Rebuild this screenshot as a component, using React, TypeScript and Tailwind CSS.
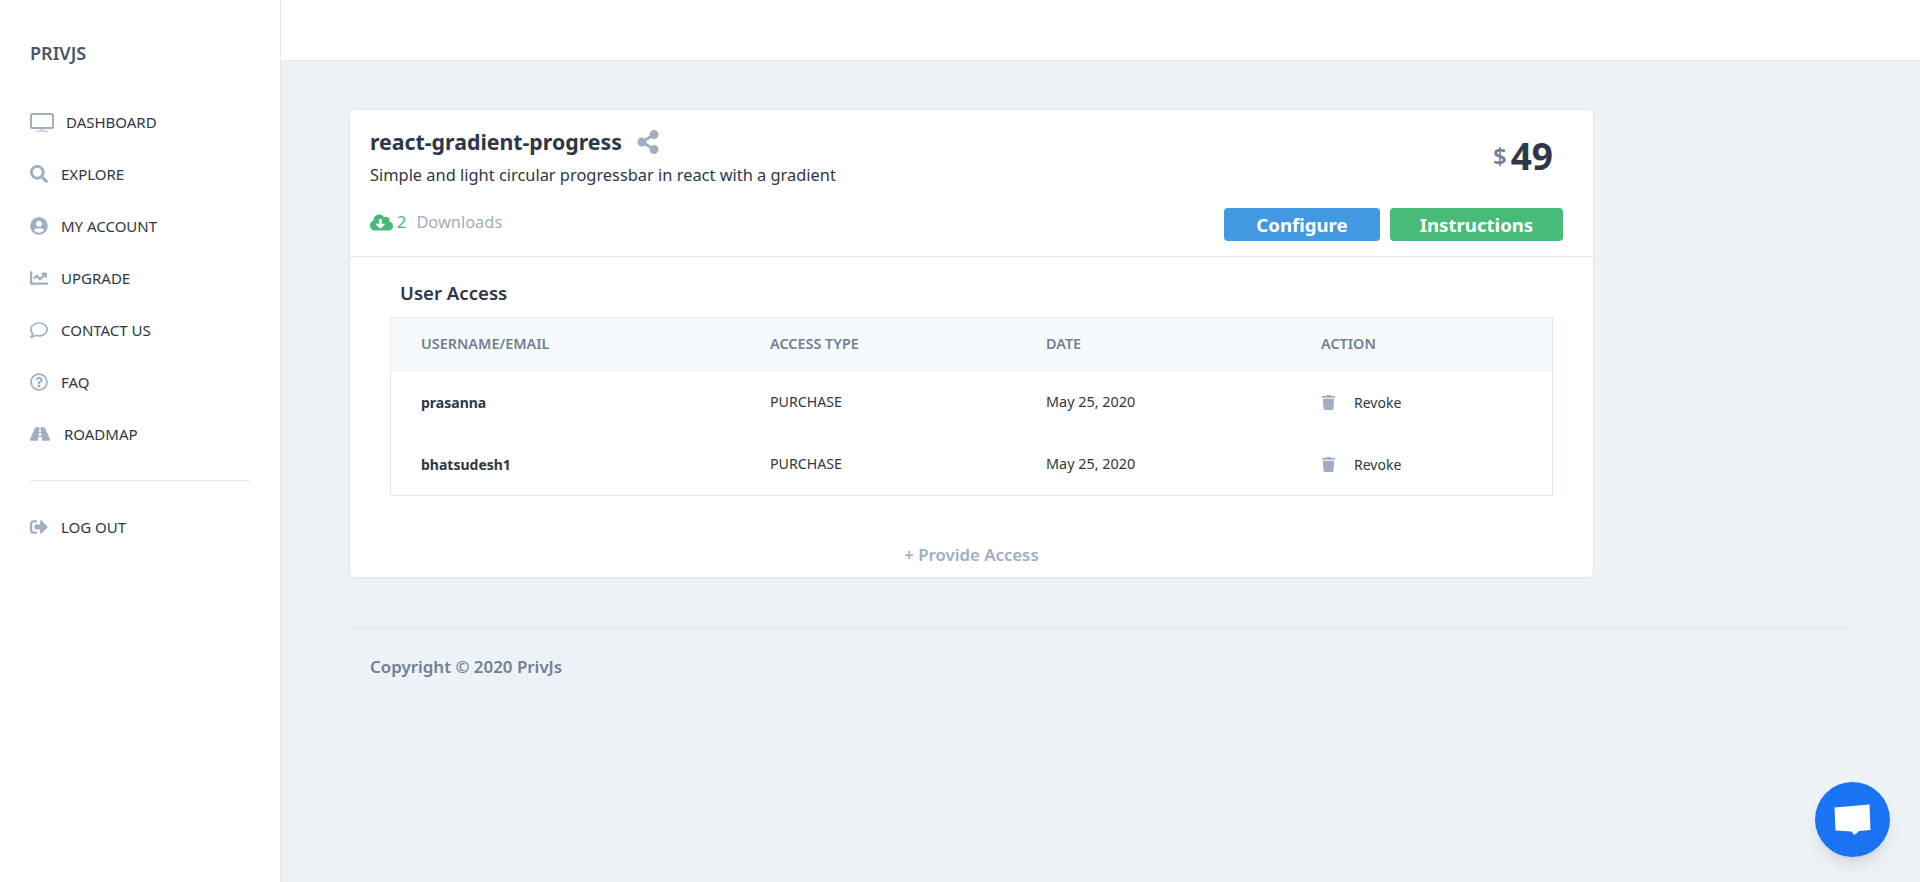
import type { IconType } from 'react-icons'
import {
  FaChartLine,
  FaCloudDownloadAlt,
  FaRegComment,
  FaRegQuestionCircle,
  FaRoad,
  FaSearch,
  FaShareAlt,
  FaSignOutAlt,
  FaTrash,
  FaUserCircle,
} from 'react-icons/fa'

const DesktopIcon: IconType = () => (
  <svg width="24" height="19" viewBox="0 0 24 19" className="shrink-0">
    <rect x="1" y="1" width="22" height="14" rx="1.5" fill="none" stroke="#a0aec0" strokeWidth="2" />
    <rect x="10" y="16" width="4" height="1.5" fill="#cbd5e0" />
    <rect x="6" y="17.5" width="12" height="1.5" fill="#cbd5e0" />
  </svg>
)

const navItems: { label: string; Icon: IconType; size: number; gap: string }[] = [
  { label: 'DASHBOARD', Icon: DesktopIcon, size: 24, gap: 'gap-[12px]' },
  { label: 'EXPLORE', Icon: FaSearch, size: 18, gap: 'gap-[13px]' },
  { label: 'MY ACCOUNT', Icon: FaUserCircle, size: 18, gap: 'gap-[13px]' },
  { label: 'UPGRADE', Icon: FaChartLine, size: 18, gap: 'gap-[13px]' },
  { label: 'CONTACT US', Icon: FaRegComment, size: 18, gap: 'gap-[13px]' },
  { label: 'FAQ', Icon: FaRegQuestionCircle, size: 18, gap: 'gap-[13px]' },
  { label: 'ROADMAP', Icon: FaRoad, size: 20, gap: 'gap-[14px]' },
]

const accessRows = [
  { user: 'prasanna', type: 'PURCHASE', date: 'May 25, 2020' },
  { user: 'bhatsudesh1', type: 'PURCHASE', date: 'May 25, 2020' },
]

const NavRow = ({ label, Icon, size, gap }: { label: string; Icon: IconType; size: number; gap: string }) => (
  <div className={`flex h-[52px] items-center ${gap}`}>
    <Icon size={size} className="shrink-0 text-[#a0aec0]" />
    <span className="text-[15px] text-[#2d3748]">{label}</span>
  </div>
)

export default function App() {
  return (
    <div className="flex min-h-[882px] bg-[#edf2f7] font-['Noto_Sans',sans-serif] text-[#2d3748]">
      <aside className="w-[281px] shrink-0 border-r border-[#e2e8f0] bg-white px-[30px] pt-[41px]">
        <div className="text-[18px] font-semibold leading-[24px] text-[#4a5568]">PRIVJS</div>
        <nav className="mt-[31px]">
          {navItems.map((item) => (
            <NavRow key={item.label} {...item} />
          ))}
        </nav>
        <div className="mt-[20px] w-[220px] border-t border-[#e2e8f0]" />
        <div className="mt-[20px]">
          <NavRow label="LOG OUT" Icon={FaSignOutAlt} size={18} gap="gap-[13px]" />
        </div>
      </aside>

      <div className="min-w-0 flex-1">
        <header className="h-[61px] border-b border-[#e2e8f0] bg-white" />
        <main className="pl-[68px] pr-[69px] pt-[48px]">
          <section className="w-[1245px] rounded-[6px] border border-[#e2e8f0] bg-white shadow-[0_1px_2px_rgba(0,0,0,0.04)]">
            <div className="flex h-[147px] items-start justify-between border-b border-[#e2e8f0] pl-[20px] pr-[31px] pt-[17px]">
              <div>
                <div className="flex items-center">
                  <h1 className="text-[21.3px] font-bold leading-[30px]">react-gradient-progress</h1>
                  <FaShareAlt size={24} className="ml-[14px] text-[#a0aec0]" />
                </div>
                <p className="mt-[6px] text-[16.4px] leading-[24px]">Simple and light circular progressbar in react with a gradient</p>
                <div className="mt-[23px] flex items-center text-[16.4px] leading-[24px]">
                  <FaCloudDownloadAlt size={23} className="text-[#48bb78]" />
                  <span className="ml-[4px] text-[#48bb78]">2</span>
                  <span className="ml-[10px] text-[#a0aec0]">Downloads</span>
                </div>
              </div>
              <div className="flex flex-col items-end">
                <div className="mr-[9px] mt-[5px] flex items-center">
                  <span className="text-[24px] font-semibold text-[#718096]">$</span>
                  <span className="ml-[4px] text-[37px] font-bold leading-[48px]">49</span>
                </div>
                <div className="mr-[-1px] mt-[28px] flex gap-[10px]">
                  <button className="h-[33px] w-[156px] rounded-[4px] bg-[#4299e1] pt-[1px] text-[18.6px] font-bold text-white">Configure</button>
                  <button className="h-[33px] w-[173px] rounded-[4px] bg-[#48bb78] pt-[1px] text-[18.6px] font-bold text-white">Instructions</button>
                </div>
              </div>
            </div>

            <div className="pl-[40px] pr-[40px]">
              <h2 className="ml-[10px] mt-[23px] text-[18.6px] font-semibold leading-[26px]">User Access</h2>
              <div className="mt-[11px] w-[1163px] border border-[#e2e8f0]">
                <div className="grid h-[53px] grid-cols-[379px_276px_275px_1fr] items-center border-b border-[#edf2f7] bg-[#f7fafc] text-[14.4px] font-semibold text-[#718096]">
                  <div className="pl-[30px]">USERNAME/EMAIL</div>
                  <div>ACCESS TYPE</div>
                  <div>DATE</div>
                  <div>ACTION</div>
                </div>
                {accessRows.map((row) => (
                  <div key={row.user} className="grid h-[62px] grid-cols-[379px_276px_275px_1fr] items-center text-[14px]">
                    <div className="pl-[30px] font-bold">{row.user}</div>
                    <div className="text-[14.2px]">{row.type}</div>
                    <div className="text-[14.4px]">{row.date}</div>
                    <div className="flex items-center">
                      <FaTrash size={15} className="text-[#a0aec0]" />
                      <span className="ml-[18px]">Revoke</span>
                    </div>
                  </div>
                ))}
              </div>
              <div className="mt-[47px] pb-[10px] text-center text-[16.8px] font-semibold leading-[24px] text-[#a0aec0]">+ Provide Access</div>
            </div>
          </section>

          <footer className="mt-[49px] border-t border-[#e2e8f0] pl-[21px] pt-[26px]">
            <span className="text-[16.9px] font-semibold text-[#718096]">Copyright © 2020 PrivJs</span>
          </footer>
        </main>
      </div>

      <button className="fixed bottom-[25px] right-[30px] flex h-[75px] w-[75px] items-center justify-center rounded-full bg-[#1a73f3] shadow-lg">
        <svg width="37" height="31" viewBox="0 0 37 31" fill="#fff">
          <path d="M0.5 3.5 35.5 0.5 36.5 26 25 27 20.5 31 17.5 27.5 1.5 26.5Z" />
        </svg>
      </button>
    </div>
  )
}
